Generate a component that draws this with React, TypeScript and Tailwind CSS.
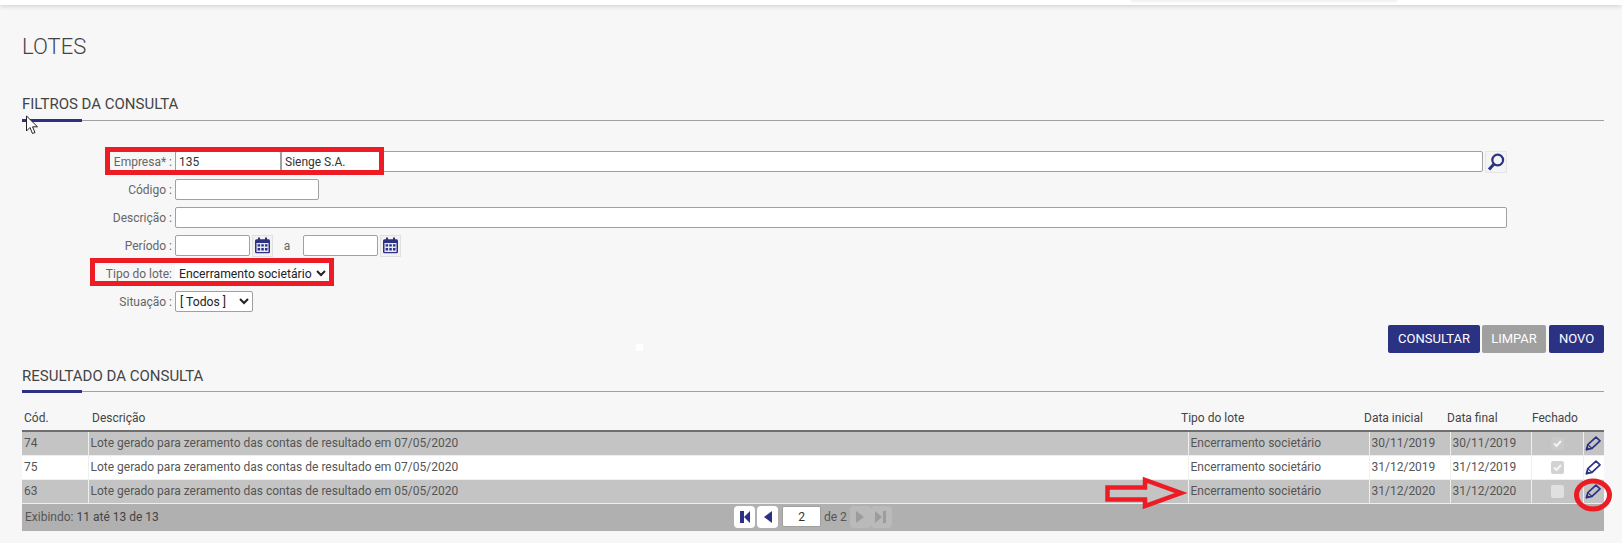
import React from "react";

const NAVY = "#2b3284";

function Pencil() {
  return (
    <svg width="16" height="15" viewBox="0 0 16 15" fill="none" stroke={NAVY} strokeWidth="1.7" strokeLinejoin="round">
      <path d="M11 1.2 L15 4.8 L7 12.4 L1.4 13.8 L2.8 8.6 Z" />
      <path d="M2.8 8.6 L7 12.4" strokeWidth="1.2" />
      <path d="M1.4 13.8 L2 11 L4.4 13 Z" fill={NAVY} strokeWidth="0.8" />
    </svg>
  );
}

function Calendar() {
  return (
    <span className="flex h-[22px] w-[21px] items-center justify-center border border-[#e0e0e0] bg-[#f2f2f2]">
      <svg width="17" height="17" viewBox="0 0 17 17">
        <path d="M4 0.5h2v3H4zM11 0.5h2v3h-2z" fill={NAVY} />
        <rect x="1" y="2.2" width="15" height="14" rx="1.5" fill={NAVY} />
        <rect x="2.5" y="6" width="12" height="9" fill="#e8e9f4" />
        <path d="M3.6 7.2h2.5v2.2H3.6zM7.3 7.2h2.5v2.2H7.3zM11 7.2h2.5v2.2H11zM3.6 11h2.5v2.4H3.6zM7.3 11h2.5v2.4H7.3zM11 11h2.5v2.4H11z" fill={NAVY} />
      </svg>
    </span>
  );
}

function Field({ label, children, className }: { label: string; children: React.ReactNode; className?: string }) {
  return (
    <div className={"flex h-[21px] items-center " + (className ?? "")}>
      <span className="w-[153px] pr-[3px] text-right text-[12px] text-[#666666]">{label}</span>
      {children}
    </div>
  );
}

const inputCls = "h-[21px] rounded-[2px] border border-[#a0a0a0] bg-white px-[3px] text-[12px] text-[#333333] outline-none";

const rows = [
  { c: "74", d: "Lote gerado para zeramento das contas de resultado em 07/05/2020", i: "30/11/2019", f: "30/11/2019", shade: true, check: true, faded: true },
  { c: "75", d: "Lote gerado para zeramento das contas de resultado em 07/05/2020", i: "31/12/2019", f: "31/12/2019", shade: false, check: true, faded: false },
  { c: "63", d: "Lote gerado para zeramento das contas de resultado em 05/05/2020", i: "31/12/2020", f: "31/12/2020", shade: true, check: false, faded: false },
];

function SectionTitle({ children, className }: { children: React.ReactNode; className?: string }) {
  return (
    <div className={"relative border-b border-[#a0a0a0] " + (className ?? "")}>
      <h2 className="text-[15px] leading-[17px] text-[#444444]">{children}</h2>
      <span className="absolute bottom-[-2px] left-0 h-[3px] w-[60px] bg-[#2b3284]" />
    </div>
  );
}

function PagerButton({ d, off }: { d: string; off?: boolean }) {
  return (
    <span className={"flex h-[22px] w-[21px] items-center justify-center rounded-[4px] " + (off ? "bg-[#bababa]" : "bg-white")}>
      <svg width="16" height="14" viewBox="0 0 16 14">
        <path d={d} fill={off ? "#9c9c9c" : NAVY} />
      </svg>
    </span>
  );
}

export default function App() {
  return (
    <div className="relative h-[543px] w-[1622px] overflow-hidden bg-[#f7f7f7] font-['Roboto',sans-serif]">
      <div className="h-[5px] bg-white shadow-[0_1px_5px_rgba(0,0,0,0.18)]" />
      <span className="absolute left-[1131px] top-[-2px] h-[2px] w-[266px] shadow-[0_1px_3px_rgba(0,0,0,0.12)]" />
      <main className="pl-[22px] pr-[18px]">
        <h1 className="mt-[29px] text-[22px] font-light leading-[26px] text-[#444444]">LOTES</h1>

        <SectionTitle className="mt-[36px] pb-[7px]">FILTROS DA CONSULTA</SectionTitle>

        <form className="mt-[30px] flex flex-col">
          <Field label="Empresa* :">
            <input readOnly value="135" className={inputCls + " w-[106px]"} />
            <input readOnly value="Sienge S.A." className={inputCls + " w-[1202px]"} />
            <span className="ml-[2px] flex h-[22px] w-[22px] items-center justify-center border border-[#e6e6e6] bg-[#f4f4f4]">
              <svg width="20" height="20" viewBox="0 0 20 20" fill="none" stroke={NAVY}>
                <circle cx="11.7" cy="8" r="5.4" strokeWidth="2.2" />
                <path d="M8 12 L3 17.5" strokeWidth="3" />
              </svg>
            </span>
          </Field>
          <Field label="Código :" className="mt-[7px]">
            <input className={inputCls + " w-[144px]"} />
          </Field>
          <Field label="Descrição :" className="mt-[7px]">
            <input className={inputCls + " w-[1332px]"} />
          </Field>
          <Field label="Período :" className="mt-[7px]">
            <input className={inputCls + " w-[75px]"} />
            <span className="ml-[2px]"><Calendar /></span>
            <span className="w-[30px] pr-[2px] text-center text-[12px] text-[#666666]">a</span>
            <input className={inputCls + " w-[75px]"} />
            <span className="ml-[2px]"><Calendar /></span>
          </Field>
          <Field label="Tipo do lote:" className="mt-[7px]">
            <select className="h-[21px] w-[154px] bg-white text-[12.2px] text-[#222222]">
              <option>Encerramento societário</option>
            </select>
          </Field>
          <Field label="Situação :" className="mt-[7px]">
            <select className="h-[21px] w-[78px] rounded-[2px] border border-[#a0a0a0] bg-white text-[12.2px] text-[#222222]">
              <option>[ Todos ]</option>
            </select>
          </Field>
        </form>

        <div className="mt-[13px] flex justify-end gap-[2px] text-[13px] text-white">
          <button className="h-[28px] w-[92px] rounded-[2px] bg-[#2b3284]">CONSULTAR</button>
          <button className="h-[28px] w-[64px] rounded-[2px] bg-[#a0a0a0]">LIMPAR</button>
          <button className="ml-[1px] h-[28px] w-[55px] rounded-[2px] bg-[#2b3284]">NOVO</button>
        </div>

        <SectionTitle className="mt-[15px] pb-[6px]">RESULTADO DA CONSULTA</SectionTitle>

        <table className="mt-[13px] w-[1582px] table-fixed border-collapse text-[12px] text-[#555555]">
          <colgroup>
            <col className="w-[66px]" /><col className="w-[1100px]" /><col className="w-[181px]" />
            <col className="w-[81px]" /><col className="w-[81px]" /><col className="w-[52px]" /><col className="w-[21px]" />
          </colgroup>
          <thead>
            <tr className="h-[26px] border-b-[2px] border-[#6e6e6e] text-left text-[#444444]">
              <th className="pl-[2px] font-normal">Cód.</th>
              <th className="pl-[4px] font-normal">Descrição</th>
              <th className="font-normal"><span className="relative left-[-7px]">Tipo do lote</span></th>
              <th className="font-normal"><span className="relative left-[-5px]">Data inicial</span></th>
              <th className="font-normal"><span className="relative left-[-3px]">Data final</span></th>
              <th className="font-normal"><span className="relative left-[1px]">Fechado</span></th>
              <th />
            </tr>
          </thead>
          <tbody>
            {rows.map((r) => (
              <tr key={r.c} className={"h-[24px] border-b border-[#efefef] " + (r.shade ? "bg-[#c4c4c4]" : "bg-white")}>
                <td className="pl-[2px]">{r.c}</td>
                <td className="border-l border-[#efefef] pl-[2px]">{r.d}</td>
                <td className="border-l border-[#efefef] pl-[2px]">Encerramento societário</td>
                <td className="border-l border-[#efefef] pl-[2px]">{r.i}</td>
                <td className="border-l border-[#efefef] pl-[2px]">{r.f}</td>
                <td className="border-l border-[#efefef]">
                  <span className={"mx-auto flex h-[13px] w-[13px] items-center justify-center rounded-[2px] " + (r.check ? (r.faded ? "bg-[#c9c9c9]" : "bg-[#d2d2d2]") : "bg-[#e0e0e0]")}>
                    {r.check && (
                      <svg width="11" height="11" viewBox="0 0 11 11" fill="none" stroke="#f4f4f4" strokeWidth="2">
                        <path d="M2 5.5 L4.5 8 L9 3" />
                      </svg>
                    )}
                  </span>
                </td>
                <td className="border-l border-[#efefef] pl-[1px]">
                  <span className="flex justify-start"><Pencil /></span>
                </td>
              </tr>
            ))}
          </tbody>
        </table>

        <div className="relative flex h-[27px] w-[1582px] items-center bg-[#b0b0b0] pl-[3px] text-[12px] text-[#555555]">
          <span>Exibindo: <span className="text-[#444444]">11 até 13 de 13</span></span>
          <div className="absolute left-[712px] top-[2px] flex items-center">
            <PagerButton d="M3 1h4v12H3zM13 1v12L7 7z" />
            <span className="ml-[2px]"><PagerButton d="M12 1v12L4 7z" /></span>
            <input readOnly value="2" className="ml-[4px] h-[21px] w-[39px] rounded-[2px] border border-[#a0a0a0] bg-white text-center text-[12px] text-[#333333]" />
            <span className="ml-[3px] mr-[3px] text-[12px]">de 2</span>
            <PagerButton off d="M4 1v12l8-6z" />
            <PagerButton off d="M2 1v12l7-6zM10 1h3v12h-3z" />
          </div>
        </div>
      </main>

      <span className="absolute left-[105px] top-[147px] h-[28px] w-[279px] border-[5px] border-[#ed1c24]" />
      <span className="absolute left-[90px] top-[258px] h-[28px] w-[244px] border-[5px] border-[#ed1c24]" />
      <span className="absolute left-[636px] top-[344px] h-[7px] w-[7px] bg-white" />
      <svg className="absolute left-[1104px] top-[476px]" width="86" height="34" viewBox="0 0 86 34" fill="none" stroke="#ed1c24" strokeWidth="4.5">
        <path d="M3.5 11.5 H41 V4 L77 17 L41 30 V23.5 H3.5 Z" />
      </svg>
      <svg className="absolute left-[1573px] top-[478px]" width="40" height="34" viewBox="0 0 40 34" fill="none" stroke="#ed1c24" strokeWidth="5">
        <ellipse cx="20" cy="17" rx="16.5" ry="14" />
      </svg>
      <svg className="absolute left-[25px] top-[115px]" width="14" height="20" viewBox="0 0 14 20">
        <path d="M1.5 1 V16 L5 12.5 L7.5 18.5 L10 17.5 L7.5 11.8 H12.5 Z" fill="white" stroke="#222222" strokeWidth="1" />
      </svg>
    </div>
  );
}
